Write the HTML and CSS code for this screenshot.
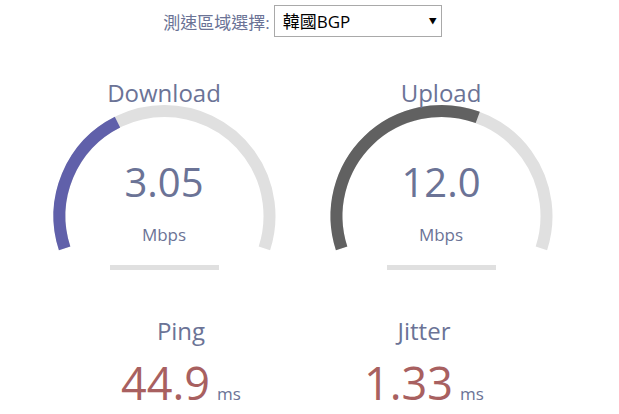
FILE: index.html
```html
<!DOCTYPE html>
<html lang="zh-Hant">
<head>
    <meta charset="UTF-8">
    <meta name="viewport" content="width=device-width, initial-scale=1.0">
    <title>Speedtest</title>
    <link rel="stylesheet" href="styles.css">
</head>
<body>
    <div class="header">
        <label for="server">測速區域選擇:</label>
        <div class="select-wrap">
            <select id="server">
                <option>韓國BGP</option>
                <option>日本</option>
                <option>香港</option>
            </select>
            <span class="arrow">▼</span>
        </div>
    </div>

    <div class="gauges">
        <div class="testArea">
            <svg class="testGauge" width="277" height="200" viewBox="0 0 277 200">
                <path class="arc-bg" d="M38.63 170.45 A105 105 0 1 1 238.37 170.45"/>
                <path class="arc-dl" d="M38.63 170.45 A105 105 0 0 1 91.48 44.11"/>
                <rect class="bar" x="84" y="187" width="109" height="5"/>
            </svg>
            <div class="testName">Download</div>
            <div class="testValue">3.05</div>
            <div class="unit">Mbps</div>
        </div>
        <div class="testArea">
            <svg class="testGauge" width="277" height="200" viewBox="0 0 277 200">
                <path class="arc-bg" d="M38.63 170.45 A105 105 0 1 1 238.37 170.45"/>
                <path class="arc-ul" d="M38.63 170.45 A105 105 0 0 1 174.76 39.46"/>
                <rect class="bar" x="84" y="187" width="109" height="5"/>
            </svg>
            <div class="testName">Upload</div>
            <div class="testValue">12.0</div>
            <div class="unit">Mbps</div>
        </div>
    </div>

    <div class="results">
        <div class="testArea2">
            <div class="testName">Ping</div>
            <div class="testValue2"><span class="num">44.9</span><span class="unit2">ms</span></div>
        </div>
        <div class="testArea2">
            <div class="testName">Jitter</div>
            <div class="testValue2"><span class="num">1.33</span><span class="unit2">ms</span></div>
        </div>
    </div>
</body>
</html>
```

FILE: styles.css
```css
body {
    margin: 0;
    font-family: "Open Sans", "Noto Sans CJK TC", sans-serif;
    color: #6b7396;
    background-color: #fff;
}

.header {
    display: flex;
    justify-content: center;
    align-items: center;
    gap: 4px;
    padding: 5px 14px 0 0;
}

.header label {
    font-size: 17px;
}

.select-wrap {
    position: relative;
}

select {
    appearance: none;
    -webkit-appearance: none;
    display: block;
    width: 168px;
    height: 32px;
    padding: 0 0 0 8px;
    font-family: "Open Sans", "Noto Sans CJK TC", sans-serif;
    font-size: 17px;
    color: #000;
    background-color: #fff;
    border: 1px solid #a9a9a9;
    border-radius: 0;
}

.arrow {
    position: absolute;
    right: 5px;
    top: 10px;
    font-size: 8px;
    color: #000;
    pointer-events: none;
}

.gauges {
    display: flex;
    justify-content: center;
    padding-right: 14px;
    margin-top: 41px;
}

.testArea {
    position: relative;
    width: 277px;
    height: 200px;
    text-align: center;
}

.testGauge {
    position: absolute;
    top: 0;
    left: 0;
}

.arc-bg,
.arc-dl,
.arc-ul {
    fill: none;
    stroke-width: 12;
}

.arc-bg {
    stroke: #e0e0e0;
}

.arc-dl {
    stroke: #6060aa;
}

.arc-ul {
    stroke: #616161;
}

.bar {
    fill: #e0e0e0;
}

.testName {
    position: relative;
    font-size: 24px;
    line-height: 30px;
}

.testValue {
    position: relative;
    margin-top: 54px;
    font-size: 40px;
    line-height: 40px;
}

.unit {
    position: relative;
    margin-top: 23px;
    font-size: 17px;
    line-height: 20px;
}

.results {
    display: flex;
    justify-content: center;
    gap: 19px;
    padding-right: 14px;
    margin-top: 38px;
}

.testArea2 {
    width: 224px;
    text-align: center;
}

.testValue2 {
    margin-top: 12px;
    line-height: 50px;
    color: #a86060;
}

.num {
    font-size: 45px;
}

.unit2 {
    margin-left: 7px;
    font-size: 17px;
    color: #6b7396;
}
```
